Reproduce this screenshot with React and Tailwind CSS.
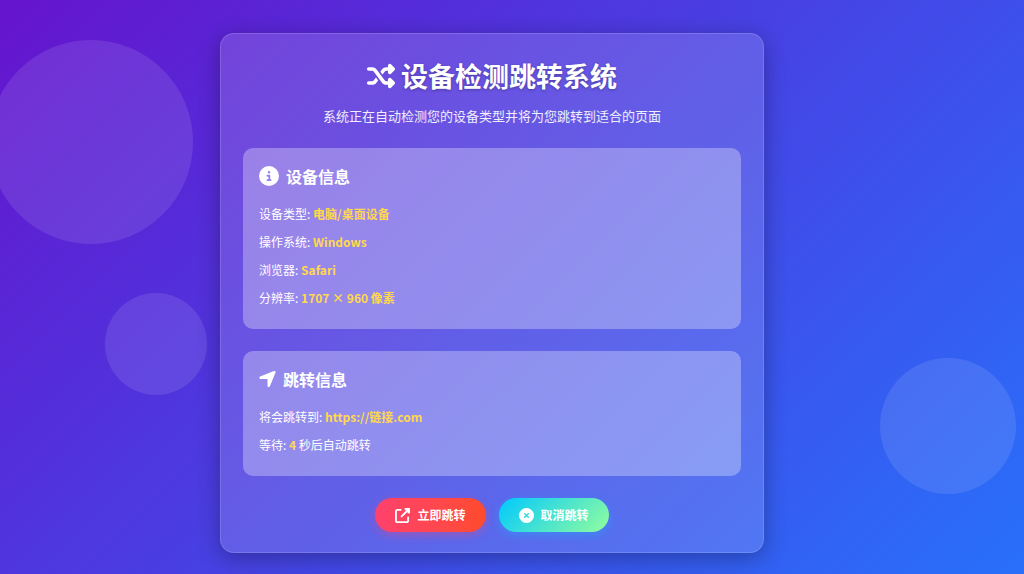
import React from 'react';
import {
  FaShuffle, FaCircleInfo, FaLocationArrow,
  FaUpRightFromSquare, FaCircleXmark,
} from 'react-icons/fa6';

const deviceInfo = [
  { label: '设备类型:', value: '电脑/桌面设备' },
  { label: '操作系统:', value: 'Windows' },
  { label: '浏览器:', value: 'Safari' },
  { label: '分辨率:', value: '1707 × 960 像素' },
];

export default function App() {
  return (
    <div className="relative min-h-screen overflow-hidden bg-linear-[135deg,#6514cd_0%,#2870fa_100%] font-['Noto_Sans_CJK_SC',sans-serif] text-white">
      {/* Background bubbles */}
      <div className="absolute -left-[11px] top-10 size-[204px] rounded-full bg-white/10" />
      <div className="absolute left-[105px] top-[293px] size-[102px] rounded-full bg-white/10" />
      <div className="absolute right-2 top-[358px] size-[136px] rounded-full bg-white/10" />

      <main className="relative flex justify-center pt-[33px] pr-10 pb-[21px]">
        <div className="w-full max-w-[544px] rounded-[14px] border border-white/15 bg-white/15 px-[22px] py-5 shadow-[0_5px_22px_rgba(0,0,0,0.3)]">
          <header className="mb-[22px] text-center">
            <h1 className="mb-2 flex h-11 items-center justify-center gap-[6px] text-[27px] font-bold [text-shadow:0_1px_3px_rgba(0,0,0,0.3)]">
              <FaShuffle size={28} />
              <span>设备检测跳转系统</span>
            </h1>
            <p className="text-[13px] leading-5 text-white/90">
              系统正在自动检测您的设备类型并将为您跳转到适合的页面
            </p>
          </header>

          <Panel icon={<FaCircleInfo className="size-5" />} title="设备信息">
            {deviceInfo.map((item) => (
              <p key={item.label}>
                {item.label} <Highlight>{item.value}</Highlight>
              </p>
            ))}
          </Panel>

          <Panel
            icon={<FaLocationArrow preserveAspectRatio="xMidYMid slice" className="h-5 w-[17px]" />}
            title="跳转信息"
          >
            <p>将会跳转到: <Highlight>https://链接.com</Highlight></p>
            <p>等待: <Highlight>4</Highlight> 秒后自动跳转</p>
          </Panel>

          <div className="flex justify-center gap-[13px]">
            <button
              type="button"
              className="flex h-[34px] items-center gap-[7px] rounded-full bg-linear-to-r from-[#ff416c] to-[#ff4b2b] px-5 text-xs font-bold shadow-[0_3px_10px_rgba(255,65,108,0.4)]"
            >
              <FaUpRightFromSquare size={15} />
              立即跳转
            </button>
            <button
              type="button"
              className="flex h-[34px] items-center gap-[7px] rounded-full bg-linear-[135deg,#00c9ff,#92fe9d] px-5 text-xs font-bold shadow-[0_3px_10px_rgba(0,201,255,0.3)]"
            >
              <FaCircleXmark size={15} />
              取消跳转
            </button>
          </div>
        </div>
      </main>
    </div>
  );
}

function Panel({ icon, title, children }) {
  return (
    <section className="mb-[22px] rounded-[10px] bg-white/30 px-4 pt-4 pb-[17px]">
      <h2 className="mb-3 flex h-6 items-center gap-[7px] text-base font-bold">
        {icon}
        <span>{title}</span>
      </h2>
      <div className="text-xs leading-7">{children}</div>
    </section>
  );
}

function Highlight({ children }) {
  return <span className="font-bold text-[#ffd84d]">{children}</span>;
}
